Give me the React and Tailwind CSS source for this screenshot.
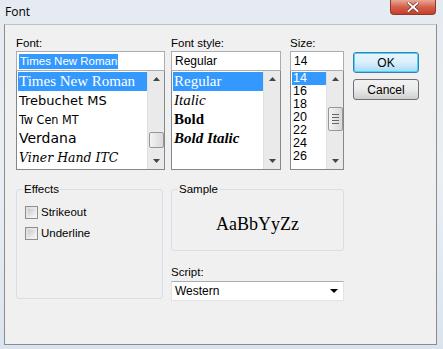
import React from "react";

const ui = { fontFamily: '"Liberation Sans", Arial, sans-serif' };
const serif = { fontFamily: '"Liberation Serif", "Times New Roman", serif' };

function ScrollArrow({ up }) {
  return (
    <div className="h-[16px] flex items-center justify-center">
      <svg width="7" height="4" viewBox="0 0 7 4">
        {up ? <path d="M0 4 L3.5 0 L7 4 Z" fill="#444" /> : <path d="M0 0 L3.5 4 L7 0 Z" fill="#444" />}
      </svg>
    </div>
  );
}

function Scrollbar({ thumbTop, thumbH }) {
  return (
    <div className="relative w-[17px] h-full bg-[#eaeaea] border-l border-[#e0e0e0] flex flex-col justify-between">
      <ScrollArrow up />
      {thumbH ? (
        <div
          className="absolute left-[1px] w-[15px] rounded-[2px] border border-[#979797] bg-gradient-to-r from-[#f3f3f3] to-[#d9d9d9] flex flex-col items-center justify-center gap-[2px]"
          style={{ top: thumbTop, height: thumbH }}
        >
          {thumbH > 18 ? (
            <>
              <div className="w-[7px] h-px bg-[#666]" />
              <div className="w-[7px] h-px bg-[#666]" />
              <div className="w-[7px] h-px bg-[#666]" />
              <div className="w-[7px] h-px bg-[#666]" />
            </>
          ) : null}
        </div>
      ) : null}
      <ScrollArrow />
    </div>
  );
}

function Input({ children, selected }) {
  return (
    <div className="h-[20px] bg-white border border-[#abadb3] flex items-center pl-[2px] text-[12px] text-black" style={ui}>
      {selected ? <span className="bg-[#3399ff] text-white leading-[15px] px-[1px] text-[11.5px]">{children}</span> : <span className="px-[1px]">{children}</span>}
    </div>
  );
}

function Label({ children }) {
  return (
    <div className="h-[15px] text-[11.5px] leading-[15px] text-black" style={ui}>
      {children}
    </div>
  );
}

function GroupBox({ title, className, children }) {
  return (
    <div className={"relative border border-[#d5dfe5] rounded-[3px] " + className}>
      <div className="absolute -top-[8px] left-[6px] bg-[#f0f0f0] px-[1px] text-[11.5px] leading-[14px] text-black" style={ui}>
        {title}
      </div>
      {children}
    </div>
  );
}

function Checkbox({ label }) {
  return (
    <div className="flex items-center gap-[3px] h-[15px]">
      <div className="w-[13px] h-[13px] border border-[#8e8f8f] bg-gradient-to-br from-[#dcdcdc] to-[#f6f6f6] p-[2px]">
        <div className="w-full h-full bg-gradient-to-br from-[#cbcbcb] to-[#f3f3f3]" />
      </div>
      <span className="text-[11.5px] text-black" style={ui}>{label}</span>
    </div>
  );
}

function Button({ children, def }) {
  return (
    <div
      className={
        "w-[66px] h-[21px] rounded-[3px] flex items-center justify-center text-[12px] text-black " +
        (def
          ? "border border-[#3c7fb1] shadow-[inset_0_0_0_1px_#48d6f7] bg-gradient-to-b from-[#eaf6fd] via-[#d9f0fc] to-[#a7d9f5]"
          : "border border-[#707070] bg-gradient-to-b from-[#f2f2f2] via-[#ebebeb] to-[#cfcfcf]")
      }
      style={ui}
    >
      {children}
    </div>
  );
}

export default function App() {
  return (
    <div className="relative w-[443px] h-[349px] overflow-hidden bg-gradient-to-b from-[#e6ebf1] via-[#eaeff4] to-[#dbe4ee]">
      {/* title bar */}
      <div className="h-[24px] flex items-center pl-[5px] text-[12px] text-black" style={{ fontFamily: '"Open Sans", "Noto Sans", sans-serif' }}>
        Font
      </div>
      <div className="absolute left-[390px] top-0 w-[46px] h-[15px] rounded-b-[4px] border border-[#8a3a2e] border-t-0 bg-gradient-to-b from-[#e9a796] via-[#d5604a] to-[#c53f28] flex items-center justify-center">
        <svg width="12" height="10" viewBox="0 0 12 10">
          <path d="M1.5 1 L10.5 9 M10.5 1 L1.5 9" stroke="#5a1e15" strokeWidth="3.2" strokeLinecap="square" />
          <path d="M1.5 1 L10.5 9 M10.5 1 L1.5 9" stroke="#ffffff" strokeWidth="2" strokeLinecap="square" />
        </svg>
      </div>

      {/* client */}
      <div className="ml-[4px] w-[433px] h-[321px] bg-[#f0f0f0] border border-[#8c8c8c] border-t-[#b9c3cc] pl-[11px] pt-[11px]">
        <div className="flex">
          {/* Font */}
          <div className="w-[149px] flex flex-col">
            <Label>Font:</Label>
            <Input selected>Times New Roman</Input>
            <div className="h-[99px] border border-[#828790] border-t-0 bg-white flex">
              <div className="flex-1 flex flex-col pt-[1px] pl-[1px]">
                <div className="h-[19px] bg-[#3399ff] text-white text-[15px] leading-[19px] pl-[1px]" style={serif}>Times New Roman</div>
                <div className="h-[19px] leading-[19px] pl-[1px] text-black" style={{ fontFamily: '"DejaVu Sans", sans-serif', fontSize: 13 }}>Trebuchet MS</div>
                <div className="h-[19px] text-[12.5px] leading-[19px] pl-[1px] text-black" style={{ fontFamily: '"DejaVu Sans Condensed", "Liberation Sans Narrow", sans-serif' }}>Tw Cen MT</div>
                <div className="h-[19px] text-[14px] leading-[19px] pl-[1px] text-black" style={{ fontFamily: '"DejaVu Sans", Verdana, sans-serif' }}>Verdana</div>
                <div className="h-[19px] text-[12.5px] leading-[19px] pl-[1px] text-black italic" style={{ fontFamily: '"DejaVu Serif", "Liberation Serif", cursive' }}>Viner Hand ITC</div>
              </div>
              <Scrollbar thumbTop={61} thumbH={16} />
            </div>
          </div>

          {/* Font style */}
          <div className="w-[110px] ml-[6px] flex flex-col">
            <Label>Font style:</Label>
            <Input>Regular</Input>
            <div className="h-[99px] border border-[#828790] border-t-0 bg-white flex">
              <div className="flex-1 flex flex-col pt-[1px] pl-[1px]">
                <div className="h-[19px] bg-[#3399ff] text-white text-[15px] leading-[19px] pl-[1px]" style={serif}>Regular</div>
                <div className="h-[19px] text-[15px] leading-[19px] pl-[1px] text-black italic" style={serif}>Italic</div>
                <div className="h-[19px] text-[15px] leading-[19px] pl-[1px] text-black font-bold" style={serif}>Bold</div>
                <div className="h-[19px] text-[15px] leading-[19px] pl-[1px] text-black font-bold italic" style={serif}>Bold Italic</div>
              </div>
              <Scrollbar />
            </div>
          </div>

          {/* Size */}
          <div className="w-[54px] ml-[9px] flex flex-col">
            <Label>Size:</Label>
            <Input>14</Input>
            <div className="h-[99px] border border-[#828790] border-t-0 bg-white flex">
              <div className="flex-1 flex flex-col pt-[1px] pl-[1px] text-[12.5px] leading-[13px] text-black" style={ui}>
                <div className="h-[13px] bg-[#3399ff] text-white pl-[1px]">14</div>
                <div className="h-[13px] pl-[1px]">16</div>
                <div className="h-[13px] pl-[1px]">18</div>
                <div className="h-[13px] pl-[1px]">20</div>
                <div className="h-[13px] pl-[1px]">22</div>
                <div className="h-[13px] pl-[1px]">24</div>
                <div className="h-[13px] pl-[1px]">26</div>
              </div>
              <Scrollbar thumbTop={36} thumbH={24} />
            </div>
          </div>

          {/* Buttons */}
          <div className="ml-[9px] pt-[16px] flex flex-col gap-[6px]">
            <Button def>OK</Button>
            <Button>Cancel</Button>
          </div>
        </div>

        {/* lower area */}
        <div className="flex mt-[19px]">
          <GroupBox title="Effects" className="w-[147px] h-[110px]">
            <div className="pl-[8px] pt-[15px] flex flex-col gap-[6px]">
              <Checkbox label="Strikeout" />
              <Checkbox label="Underline" />
            </div>
          </GroupBox>

          <div className="ml-[8px] w-[173px] flex flex-col">
            <GroupBox title="Sample" className="h-[62px] flex items-center justify-center">
              <span className="text-[18px] text-black pt-[9px]" style={serif}>AaBbYyZz</span>
            </GroupBox>
            <div className="mt-[14px]">
              <Label>Script:</Label>
            </div>
            <div className="h-[20px] mt-[1px] bg-white border border-[#e3e3e3] border-t-[#abadb3] flex items-center justify-between pl-[3px] pr-[5px] text-[12px] text-black" style={ui}>
              <span>Western</span>
              <svg width="8" height="4" viewBox="0 0 8 4"><path d="M0 0 L4 4 L8 0 Z" fill="#000" /></svg>
            </div>
          </div>
        </div>
      </div>
    </div>
  );
}
